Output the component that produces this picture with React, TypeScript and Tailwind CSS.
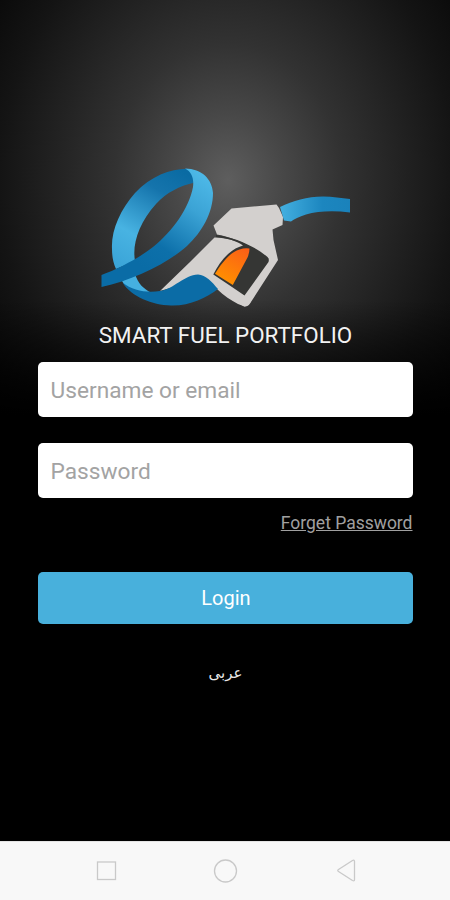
import { FC, FormEvent, useState } from 'react';

const Logo: FC = () => {
    return (
        <svg className="block h-[146px] w-[260px]" viewBox="95 164 260 146" fill="none">
            <defs>
                <linearGradient id="loop" x1="180" y1="170" x2="124" y2="268" gradientUnits="userSpaceOnUse">
                    <stop offset="0" stopColor="#0a6ba3" />
                    <stop offset="0.25" stopColor="#1574ac" />
                    <stop offset="0.7" stopColor="#48b3e2" />
                    <stop offset="1" stopColor="#3ba5d8" />
                </linearGradient>
                <linearGradient id="ribbon" x1="207" y1="180" x2="145" y2="268" gradientUnits="userSpaceOnUse">
                    <stop offset="0" stopColor="#4cb7e6" />
                    <stop offset="0.3" stopColor="#3ba3d5" />
                    <stop offset="0.75" stopColor="#0d70aa" />
                    <stop offset="1" stopColor="#0a6ca6" />
                </linearGradient>
                <linearGradient id="hose" x1="281" y1="0" x2="350" y2="0" gradientUnits="userSpaceOnUse">
                    <stop offset="0" stopColor="#43afe0" />
                    <stop offset="0.6" stopColor="#1c86bf" />
                    <stop offset="1" stopColor="#1a82bb" />
                </linearGradient>
                <linearGradient id="flame" x1="246" y1="248" x2="226" y2="283" gradientUnits="userSpaceOnUse">
                    <stop offset="0" stopColor="#fb5e17" />
                    <stop offset="1" stopColor="#ff9000" />
                </linearGradient>
            </defs>

            {/* loop */}
            <path d="M187 168.800C170 169 151 176 135 193C120 210 111 231 112 249C112 256 113 262 116 269L135 261C132 244 139 223 156 204C167 192 180 186 193 183L196 173Z" fill="url(#loop)" />
            <path d="M122 281L135 274C138 283 143 289 152 293L146 298C136 295 127 290 122 281Z" fill="#45b0e1" />
            <path d="M185 168.600C202 169 212 179 213 193C213 213 202 232 187 246C167 264 133 280 101.500 287V275C118 269 139 258 153 247C173 231 189 208 193 187C194 179 192 172 185 168.600Z" fill="url(#ribbon)" />

            {/* nozzle */}
            <path d="M214.500 237.500C229 238 241 242 252 248L269 259L250 303L245 306.500L238 304C231 300 224 296 217 289L205 278L160 291L190 262Z" fill="#d3d0ce" />
            <path d="M122.500 282.500C133 291 147 293 160 291C174 289 184 275 198 274.500C206 275 212 282 218 289C206 298 190 306 171 305.500C152 305 132 297 122.500 282.500Z" fill="#0b6ca6" />
            <path d="M231.500 208.500L276.500 204.500L279 208L283 217L282.500 225L272.500 229.500L273.500 240L278 260L250 303.500Q248 307 244 306.500L229 298L242 294L269 259C255 248 236 238 217 234.500L213.500 225.500Z" fill="#d3d0ce" />
            <path d="M216 235C236 237.500 256 247 267.500 257Q269.500 259 268.500 262L244.500 295.500L232 287L213.300 274.500C219 263 228 251 239 247L243 245.500C235 240 226 238 216 237Z" fill="#353634" />
            <path d="M215 273.800C221 264 230 252 239.500 249.500Q245 247.500 249.500 248.500Q249.500 253 247.500 257.500L232.800 285Z" fill="url(#flame)" />

            {/* hose */}
            <path d="M280 207C293 201 307 196.500 323 196.500C333 196.500 341 198 350 199V212.500C334 210.500 318 211 306 214.500C299 217 294 219 291 221.500L284 220.500Z" fill="url(#hose)" />
        </svg>
    );
};

const NavBar: FC = () => {
    return (
        <nav className="flex h-[59px] items-center justify-between border-t border-[#e4e4e4] bg-[#f8f8f8] px-[93px]">
            <svg className="h-7 w-7" viewBox="0 0 28 28" fill="none" stroke="#c9c9c9" strokeWidth="1.3">
                <rect x="4.500" y="5" width="18" height="17.500" />
            </svg>
            <svg className="h-7 w-7" viewBox="0 0 28 28" fill="none" stroke="#c9c9c9" strokeWidth="1.3">
                <circle cx="14.500" cy="14" r="11" />
            </svg>
            <svg className="h-7 w-7" viewBox="0 0 28 28" fill="none" stroke="#c9c9c9" strokeWidth="1.3" strokeLinejoin="round">
                <path d="M9.500 12.500Q8 13.500 9.500 14.500L23.500 23.500Q25.500 24.500 25.500 22.500V4.500Q25.500 2.500 23.500 3.500Z" />
            </svg>
        </nav>
    );
};

const inputStyle = "block h-[55px] w-full rounded-[5px] bg-white px-[13px] pt-[2px] text-[22.7px] text-[#333] placeholder:text-[#a3a3a3] outline-none";

export default function App() {
    const [ username, setUsername ] = useState<string>('');
    const [ password, setPassword ] = useState<string>('');

    const onLogin = (e: FormEvent) => {
        e.preventDefault();
    };

    return (
        <div className="flex h-[900px] w-[450px] flex-col overflow-hidden bg-black font-[Roboto,sans-serif]">
            <main className="flex flex-1 flex-col items-center bg-[linear-gradient(to_bottom,transparent_300px,#000_415px),radial-gradient(ellipse_300px_360px_at_228px_180px,#5e5e5e_0%,#484848_18%,#323232_38%,#222222_58%,#141414_76%,#050505_100%)] pt-[164px]">
                <Logo />
                <h1 className="mt-[10px] pl-px text-[22.4px] leading-[30px] whitespace-nowrap text-[#f2f2f2]">SMART FUEL PORTFOLIO</h1>

                <form className="mt-[12px] flex w-[375px] flex-col" onSubmit={onLogin}>
                    <input
                        className={inputStyle}
                        type="text"
                        placeholder="Username or email"
                        value={username}
                        onChange={(e) => setUsername(e.target.value)} />
                    <input
                        className={`${inputStyle} mt-[26px]`}
                        type="password"
                        placeholder="Password"
                        value={password}
                        onChange={(e) => setPassword(e.target.value)} />
                    <a className="mt-[13px] self-end text-[17.5px] leading-6 text-[#a0a0a0] underline" href="#">Forget Password</a>
                    <button className="mt-[37px] h-[52px] rounded-[5px] bg-[#48b0dc] pl-[2px] text-[20px] text-white" type="submit">
                        Login
                    </button>
                </form>

                <button className="mt-[37px] pl-px font-['DejaVu_Sans',sans-serif] text-[15px] leading-6 text-[#e8e8e8]" lang="ar">عربى</button>
            </main>
            <NavBar />
        </div>
    );
}
